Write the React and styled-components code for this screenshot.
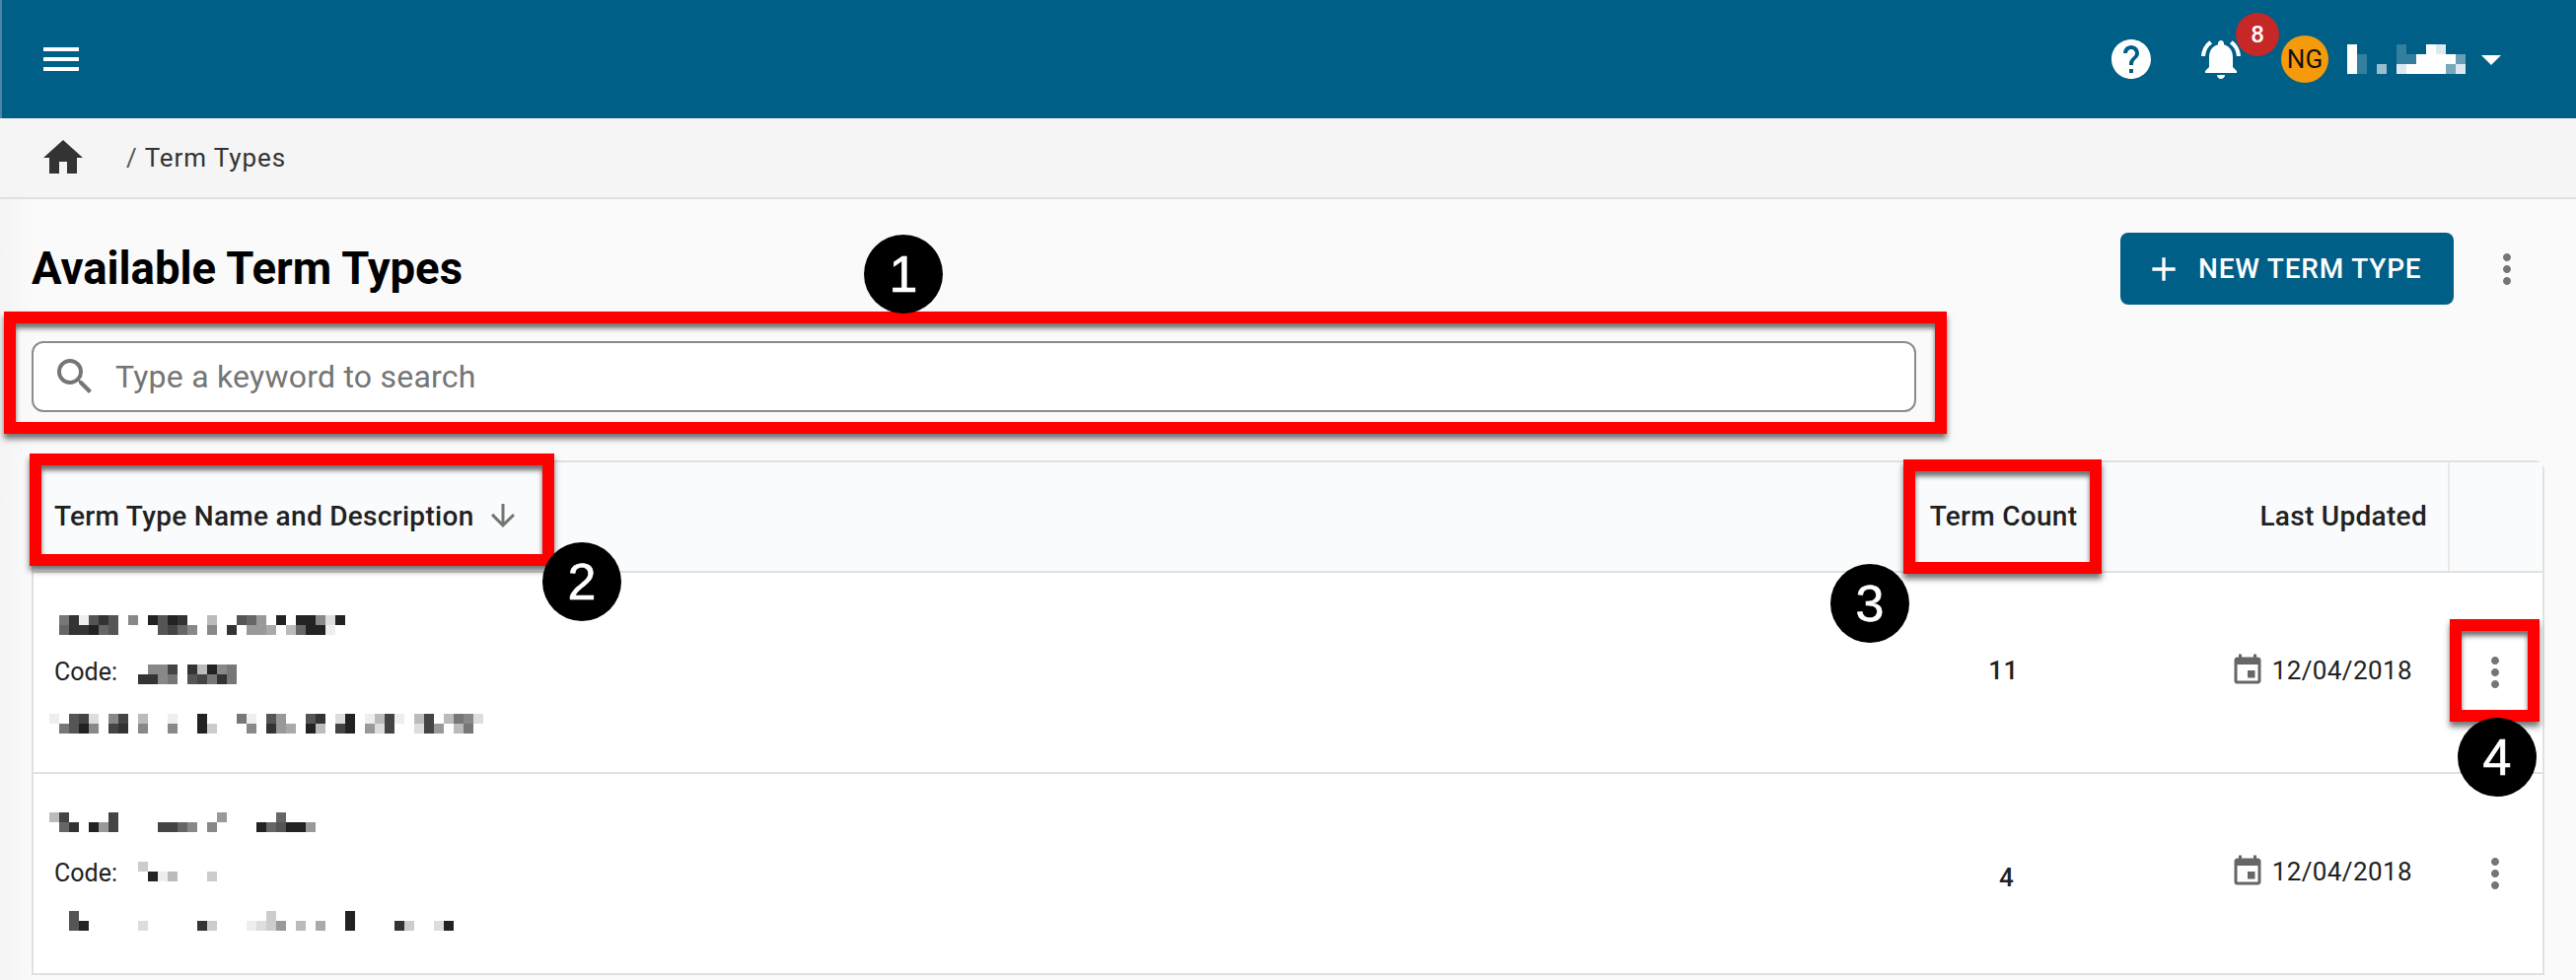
import React from 'react';
import styled, { createGlobalStyle } from 'styled-components';
import {
  MdAdd,
  MdArrowDownward,
  MdArrowDropDown,
  MdEvent,
  MdHelp,
  MdHome,
  MdMenu,
  MdMoreVert,
  MdNotificationsActive,
  MdSearch,
} from 'react-icons/md';

const BLUE = '#005f86';

const GlobalStyle = createGlobalStyle`
  html, body {
    margin: 0;
    padding: 0;
    background: #fafafa;
  }
  * {
    box-sizing: border-box;
  }
`;

const Page = styled.div`
  position: relative;
  width: 2612px;
  height: 994px;
  overflow: hidden;
  font-family: Roboto, "Liberation Sans", sans-serif;
  color: #212121;
  background: linear-gradient(90deg, #f4f4f4 0, #fafafa 30px);
`;

const TopBar = styled.header`
  display: flex;
  align-items: center;
  height: 120px;
  padding: 0 62px 0 36px;
  background: ${BLUE};
  border-left: 2px solid #4b86a4;
  color: #fff;
`;

const BarIcons = styled.div`
  display: flex;
  align-items: center;
  margin-left: auto;
`;

const BellWrap = styled.div`
  position: relative;
  display: flex;
  margin: 0 37px 0 43px;
`;

const BellCount = styled.span`
  position: absolute;
  top: -23px;
  left: 39px;
  width: 44px;
  height: 44px;
  border-radius: 50%;
  background: #c62828;
  font-size: 24px;
  font-weight: 500;
  line-height: 44px;
  text-align: center;
`;

const Avatar = styled.span`
  width: 48px;
  height: 48px;
  margin-right: 19px;
  border-radius: 50%;
  background: #f59b0b;
  color: #111;
  font-size: 26px;
  line-height: 48px;
  text-align: center;
`;

const Caret = styled(MdArrowDropDown)`
  margin-left: 2px;
`;

const Crumbs = styled.nav`
  display: flex;
  align-items: center;
  height: 82px;
  padding-left: 40px;
  background: #f5f5f5;
  border-bottom: 2px solid #e0e0e0;
  color: #333;
  font-size: 26px;
  letter-spacing: 0.9px;
`;

const CrumbSlash = styled.span`
  margin: 0 7px 0 40px;
  color: #555;
`;

const Main = styled.main`
  padding: 34px 32px 0;
`;

const TitleRow = styled.div`
  display: flex;
  align-items: center;
  height: 73px;
  padding-right: 14px;
`;

const Title = styled.h1`
  margin: 0 auto 0 0;
  color: #000;
  font-size: 45.5px;
  font-weight: 700;
  line-height: 75px;
`;

const NewButton = styled.button`
  display: flex;
  align-items: center;
  width: 338px;
  height: 73px;
  margin-right: 30px;
  padding: 0 0 0 24px;
  border: 0;
  border-radius: 8px;
  background: ${BLUE};
  color: #fff;
  font: 500 28px Roboto, sans-serif;
  letter-spacing: 0.8px;
  gap: 15px;
`;

const SearchBox = styled.label`
  display: flex;
  align-items: center;
  width: 1911px;
  height: 72px;
  margin-top: 37px;
  padding-left: 18px;
  background: #fff;
  border: 2px solid #8c8c8c;
  border-radius: 12px;
  color: #757575;
  gap: 15px;
`;

const SearchInput = styled.input`
  flex: 1;
  border: 0;
  outline: 0;
  background: transparent;
  font: 400 32px Roboto, sans-serif;
  letter-spacing: 0.23px;
  &::placeholder {
    color: #757575;
    opacity: 1;
  }
`;

const Table = styled.section`
  width: 2548px;
  margin-top: 49px;
  background: #fff;
  border: 2px solid #e0e0e0;
  border-bottom: 0;
  border-radius: 10px 10px 0 0;
`;

const Row = styled.div`
  display: grid;
  grid-template-columns: 1909px 177px 362px 96px;
  height: ${props => props.$height}px;
  border-bottom: 2px solid #e0e0e0;
`;

const HeadCell = styled.div`
  display: flex;
  align-items: center;
  justify-content: ${props => props.$justify || 'flex-start'};
  padding: 0 ${props => props.$pad ?? 21}px 2px;
  background: #f9fbfc;
  font-size: 28px;
  font-weight: 500;
  letter-spacing: 0.3px;
  white-space: nowrap;
  color: #212121;
  gap: 11px;
`;

const HeadAction = styled(HeadCell)`
  border-left: 2px solid #e9e9e9;
`;

const NameCell = styled.div`
  display: flex;
  flex-direction: column;
  padding-top: 29px;
`;

const Line = styled.div`
  display: flex;
  height: 48px;
`;

const CodeLabel = styled.span`
  width: 85px;
  margin-left: 21px;
  font-size: 25px;
  line-height: 48px;
`;

const Pixels = styled.svg`
  display: block;
  flex: none;
  margin-top: ${props => props.$top || 0}px;
  margin-left: ${props => props.$left || 0}px;
`;

const CountCell = styled.div`
  display: flex;
  align-items: center;
  justify-content: center;
  margin-top: ${props => props.$nudge}px;
  padding-left: ${props => props.$indent}px;
  font-size: 26px;
  font-weight: 500;
  letter-spacing: 0.4px;
`;

const DateCell = styled.div`
  display: flex;
  align-items: center;
  justify-content: flex-end;
  padding: 0 36px 4px 0;
  color: #212121;
  font-size: 26px;
  letter-spacing: 0.4px;
  gap: 7px;
`;

const DateIcon = styled(MdEvent)`
  color: #666;
`;

const ActionCell = styled.div`
  display: flex;
  align-items: center;
  justify-content: center;
  color: #757575;
`;

const PageKebab = styled(MdMoreVert)`
  color: #757575;
`;

const Callout = styled.div`
  position: absolute;
  top: ${props => props.$y}px;
  left: ${props => props.$x}px;
  width: ${props => props.$w}px;
  height: ${props => props.$h}px;
  border: 12px solid #f00;
  box-shadow: 0 5px 6px rgba(0, 0, 0, 0.55), inset 0 5px 5px rgba(0, 0, 0, 0.55);
`;

const Marker = styled.span`
  position: absolute;
  top: ${props => props.$y - 40}px;
  left: ${props => props.$x - 40}px;
  width: 80px;
  height: 80px;
  border-radius: 50%;
  background: #000;
  color: #fff;
  font: 400 52px/80px "Liberation Sans", sans-serif;
  -webkit-text-stroke: 0.6px #fff;
  text-align: center;
`;

// pixelated (redacted) text: one hex digit per 10px block, "." is empty
function Mosaic({ rows, light, left, top }) {
  const width = rows[0].length * 10;
  return (
    <Pixels
      width={width}
      height={rows.length * 10}
      viewBox={`0 0 ${width} ${rows.length * 10}`}
      shapeRendering="crispEdges"
      $left={left}
      $top={top}
      aria-hidden
    >
      {rows.map((row, y) =>
        row.split('').map((c, x) => {
          if (c === '.') return null;
          return (
            <rect
              key={`${x}-${y}`}
              x={x * 10}
              y={y * 10}
              width="10"
              height="10"
              fill={light ? '#fff' : `#${c}${c}${c}`}
              fillOpacity={light ? parseInt(c, 16) / 15 : 1}
            />
          );
        })
      )}
    </Pixels>
  );
}

const userName = ['f....3..fd..', 'f3...33ffff6', 'f3.9.dffff7d'];

const termTypes = [
  {
    count: '11',
    nudge: -4,
    indent: 0,
    title: { left: 26, top: 14, rows: ['73e535f8.2523f.b.f569.2.228d2', '633265....5468.8.3f99a.b622e.'] },
    code: { top: 16, rows: ['.884.3b287', '3387.54737'] },
    desc: {
      left: 16,
      top: 8,
      rows: [
        '...........f................................',
        'e.54d.84.b.fe..2...7e.59f.53.d2.eb4efb4fb78d',
        '.7528.43.8..8..2c...8.39a.2b.42.9d4..d49fb7.',
      ],
    },
  },
  {
    count: '4',
    nudge: 8,
    indent: 6,
    title: {
      left: 16,
      top: 10,
      rows: ['b4....4..........9.....6...', '.63f294....4468.8...f265229', '........f.f......f.........'],
    },
    code: { top: 12, rows: ['c.......', '.2eb..fc'] },
    desc: {
      left: 16,
      top: 14,
      rows: ['..5...................c.......2..........', '..52.f...d.....3c...edc9.b.a..2....3c..d2'],
    },
  },
];

const callouts = [
  { x: 4, y: 316, w: 1970, h: 124 },
  { x: 30, y: 460, w: 532, h: 114 },
  { x: 1930, y: 466, w: 201, h: 116 },
  { x: 2484, y: 628, w: 91, h: 104 },
];

const markers = [
  { n: 1, x: 916, y: 278 },
  { n: 2, x: 590, y: 590 },
  { n: 3, x: 1896, y: 612 },
  { n: 4, x: 2532, y: 768 },
];

function App() {
  return (
    <Page>
      <GlobalStyle />
      <TopBar>
        <MdMenu size={48} />
        <BarIcons>
          <MdHelp size={48} />
          <BellWrap>
            <MdNotificationsActive size={48} />
            <BellCount>8</BellCount>
          </BellWrap>
          <Avatar>NG</Avatar>
          <Mosaic rows={userName} light />
          <Caret size={48} />
        </BarIcons>
      </TopBar>
      <Crumbs>
        <MdHome size={48} />
        <CrumbSlash>/</CrumbSlash>
        Term Types
      </Crumbs>
      <Main>
        <TitleRow>
          <Title>Available Term Types</Title>
          <NewButton>
            <MdAdd size={40} />
            NEW TERM TYPE
          </NewButton>
          <PageKebab size={48} />
        </TitleRow>
        <SearchBox>
          <MdSearch size={48} />
          <SearchInput placeholder="Type a keyword to search" />
        </SearchBox>
        <Table>
          <Row $height={112}>
            <HeadCell>
              Term Type Name and Description
              <MdArrowDownward size={36} color="#757575" />
            </HeadCell>
            <HeadCell $justify="center" $pad={0}>Term Count</HeadCell>
            <HeadCell $justify="flex-end">Last Updated</HeadCell>
            <HeadAction />
          </Row>
          {termTypes.map((t, i) => (
            <Row key={i} $height={204}>
              <NameCell>
                <Line>
                  <Mosaic {...t.title} />
                </Line>
                <Line>
                  <CodeLabel>Code:</CodeLabel>
                  <Mosaic {...t.code} />
                </Line>
                <Line>
                  <Mosaic {...t.desc} />
                </Line>
              </NameCell>
              <CountCell $nudge={t.nudge} $indent={t.indent}>{t.count}</CountCell>
              <DateCell>
                <DateIcon size={36} />
                12/04/2018
              </DateCell>
              <ActionCell>
                <MdMoreVert size={48} />
              </ActionCell>
            </Row>
          ))}
        </Table>
      </Main>
      {callouts.map((c, i) => (
        <Callout key={i} $x={c.x} $y={c.y} $w={c.w} $h={c.h} />
      ))}
      {markers.map(m => (
        <Marker key={m.n} $x={m.x} $y={m.y}>
          {m.n}
        </Marker>
      ))}
    </Page>
  );
}

export default App;
